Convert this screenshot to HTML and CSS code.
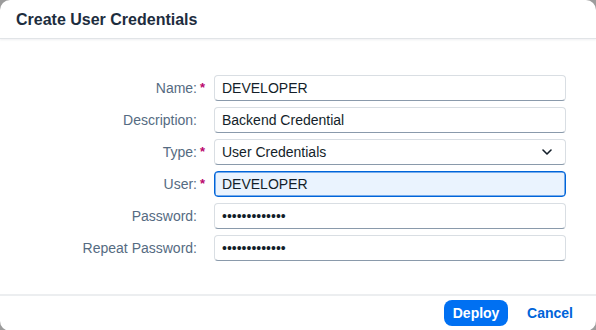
FILE: index.html
```html
<!DOCTYPE html>
<html lang="en">
<head>
    <meta charset="UTF-8">
    <meta name="viewport" content="width=device-width, initial-scale=1.0">
    <title>Create User Credentials</title>
    <link rel="stylesheet" href="styles.css">
</head>
<body>
    <div class="dialog">
        <header class="dialog-header">
            <h1>Create User Credentials</h1>
        </header>

        <div class="dialog-content">
            <form class="form">
                <label class="label required">Name:<span class="req"></span></label>
                <input class="field" type="text" value="DEVELOPER">

                <label class="label">Description:<span class="req"></span></label>
                <input class="field" type="text" value="Backend Credential">

                <label class="label required">Type:<span class="req"></span></label>
                <div class="field select">
                    <span>User Credentials</span>
                    <svg class="chevron" width="10" height="6" viewBox="0 0 10 6">
                        <path d="M1 1 L5 5 L9 1" fill="none" stroke="#131e29" stroke-width="1.6" stroke-linecap="round" stroke-linejoin="round"/>
                    </svg>
                </div>

                <label class="label required">User:<span class="req"></span></label>
                <input class="field focused" type="text" value="DEVELOPER">

                <label class="label">Password:<span class="req"></span></label>
                <input class="field" type="password" value="secretpasswd1">

                <label class="label">Repeat Password:<span class="req"></span></label>
                <input class="field" type="password" value="secretpasswd1">
            </form>
        </div>

        <footer class="dialog-footer">
            <button class="btn btn-emphasized" type="button">Deploy</button>
            <button class="btn btn-transparent" type="button">Cancel</button>
        </footer>
    </div>
</body>
</html>
```

FILE: styles.css
```css
html, body {
    margin: 0;
    padding: 0;
}
body {
    background: #9c9c9c;
    font-family: "Liberation Sans", Arial, sans-serif;
    color: #131e29;
    overflow: hidden;
}
.dialog {
    width: 596px;
    height: 331px;
    background: #fff;
    border-radius: 10px;
    display: flex;
    flex-direction: column;
    overflow: hidden;
}
.dialog-header {
    height: 38px;
    border-bottom: 1px solid #e1e4e7;
    box-shadow: 0 1px 2px rgba(34, 53, 72, 0.08);
    display: flex;
    align-items: center;
    padding: 0 16px;
    position: relative;
}
.dialog-header h1 {
    margin: 0;
    font-size: 16px;
    font-weight: bold;
    color: #1d2d3e;
    padding-top: 1px;
}
.dialog-content {
    flex: 1;
    padding-top: 36px;
}
.form {
    display: grid;
    grid-template-columns: 214px 352px;
    row-gap: 6px;
    margin: 0;
}
.label {
    display: flex;
    align-items: center;
    justify-content: flex-end;
    padding-right: 9px;
    font-size: 14px;
    color: #556b82;
    height: 26px;
}
.req {
    display: inline-block;
    width: 8px;
    text-align: right;
    color: #ba066c;
    font-weight: bold;
    font-size: 13px;
    align-self: flex-start;
    padding-top: 5px;
}
.required .req::after {
    content: "*";
}
.field {
    box-sizing: border-box;
    height: 26px;
    width: 352px;
    margin: 0;
    padding: 0 7px;
    border: 1px solid #d9dee3;
    border-bottom-color: #8a9aab;
    border-radius: 4px;
    background: #fff;
    font-family: "Liberation Sans", Arial, sans-serif;
    font-size: 14px;
    color: #131e29;
    outline: none;
}
.field.focused {
    background: #eaf3fe;
    border: 1px solid #0064d9;
    box-shadow: inset 0 0 0 0.5px #0064d9;
}
.select {
    display: flex;
    align-items: center;
    justify-content: space-between;
    padding-right: 13px;
}
.chevron {
    display: block;
}
.dialog-footer {
    height: 34px;
    border-top: 2px solid #eceef0;
    display: flex;
    align-items: center;
    justify-content: flex-end;
    gap: 8px;
    padding: 0 12px 1px 0;
}
.btn {
    height: 26px;
    border: none;
    border-radius: 8px;
    font-family: "Liberation Sans", Arial, sans-serif;
    font-size: 14px;
    font-weight: bold;
    cursor: pointer;
}
.btn-emphasized {
    background: #0070f2;
    color: #fff;
    width: 64px;
    padding: 0;
}
.btn-transparent {
    background: transparent;
    color: #0064d9;
    padding: 0 11px;
}
```
